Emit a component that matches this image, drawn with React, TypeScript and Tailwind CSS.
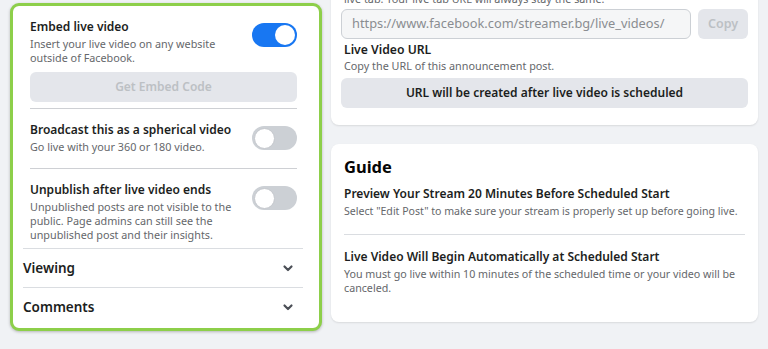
import React from "react";

const font = { fontFamily: '"Noto Sans", "Open Sans", sans-serif' };

function Toggle({ on }: { on: boolean }) {
  return on ? (
    <div className="w-[45px] h-[24px] rounded-full bg-[#1877f2] flex items-center justify-end pr-[2px] shrink-0">
      <div className="w-[20px] h-[20px] rounded-full bg-white" />
    </div>
  ) : (
    <div className="w-[45px] h-[24px] rounded-full bg-[#ccd0d5] flex items-center pl-[2px] shrink-0">
      <div className="w-[21px] h-[21px] rounded-full bg-white border border-[#c4c7cc]" />
    </div>
  );
}

function Chevron() {
  return (
    <svg width="14" height="14" viewBox="0 0 14 14" className="shrink-0">
      <path d="M3.5 5.5 L7 9 L10.5 5.5" fill="none" stroke="#4b4f56" strokeWidth="2.2" strokeLinecap="round" strokeLinejoin="round" />
    </svg>
  );
}

export default function App() {
  return (
    <div style={font} className="w-[768px] h-[349px] bg-[#f0f2f5] overflow-hidden flex items-start">
      {/* Left card */}
      <div className="ml-[10px] mt-[3px] w-[312px] h-[328px] border-[3px] border-[#8dcf4a] rounded-[9px] bg-white shadow-[0_1px_3px_rgba(0,0,0,0.25)] pl-[10px] pr-[16px] flex flex-col">
        <div className="pl-[7px] pr-[6px]">
          {/* Embed */}
          <div className="flex items-start justify-between pt-[13px]">
            <div>
              <div className="text-[12px] leading-[16px] font-semibold text-[#1c1e21]">Embed live video</div>
              <div className="text-[10.8px] leading-[14px] text-[#65676b] mt-[2px] w-[200px]">
                Insert your live video on any website outside of Facebook.
              </div>
            </div>
            <div className="mt-[4px]"><Toggle on /></div>
          </div>
          <div className="mt-[7px] h-[30px] rounded-[6px] bg-[#e4e6eb] flex items-center justify-center text-[12px] font-semibold text-[#bcc0c4]">
            Get Embed Code
          </div>
          <div className="mt-[6px] h-px bg-[#ced0d4]" />
          {/* Spherical */}
          <div className="flex items-start justify-between pt-[13px] h-[59px]">
            <div>
              <div className="text-[12px] leading-[16px] font-semibold text-[#1c1e21]">Broadcast this as a spherical video</div>
              <div className="text-[10.8px] leading-[14px] text-[#65676b] mt-[2px]">Go live with your 360 or 180 video.</div>
            </div>
            <div className="mt-[4px]"><Toggle on={false} /></div>
          </div>
          <div className="h-px bg-[#ced0d4]" />
          {/* Unpublish */}
          <div className="flex items-start justify-between pt-[13px] h-[79px]">
            <div>
              <div className="text-[12px] leading-[16px] font-semibold text-[#1c1e21]">Unpublish after live video ends</div>
              <div className="text-[10.8px] leading-[14px] text-[#65676b] mt-[2px] w-[202px]">
                Unpublished posts are not visible to the public. Page admins can still see the unpublished post and their insights.
              </div>
            </div>
            <div className="mt-[4px]"><Toggle on={false} /></div>
          </div>
        </div>
        <div className="h-px bg-[#dadde1]" />
        <div className="h-[38px] flex items-center justify-between pr-[8px]">
          <span className="text-[13.5px] font-semibold text-[#1c1e21]">Viewing</span>
          <Chevron />
        </div>
        <div className="h-px bg-[#dadde1]" />
        <div className="h-[38px] flex items-center justify-between pr-[8px]">
          <span className="text-[13.5px] font-semibold text-[#1c1e21]">Comments</span>
          <Chevron />
        </div>
      </div>

      {/* Right column */}
      <div className="ml-[9px] w-[427px] flex flex-col">
        <div className="-mt-[8px] bg-white rounded-b-[8px] shadow-[0_1px_2px_rgba(0,0,0,0.1)] px-[10px] pb-[17px]">
          <div className="text-[10.8px] leading-[13px] text-[#65676b] pl-[3px]">live tab. Your live tab URL will always stay the same.</div>
          <div className="mt-[4px] flex gap-[7px]">
            <div className="flex-1 h-[30px] rounded-[6px] border border-[#ccd0d5] bg-[#f5f6f7] flex items-center pl-[10px] text-[12.8px] text-[#8a8d91]">
              https://www.facebook.com/streamer.bg/live_videos/
            </div>
            <div className="w-[50px] h-[30px] rounded-[6px] bg-[#e4e6eb] flex items-center justify-center text-[12.5px] font-semibold text-[#bcc0c4]">
              Copy
            </div>
          </div>
          <div className="pl-[3px] mt-[3px] text-[12.2px] leading-[16px] font-semibold text-[#1c1e21]">Live Video URL</div>
          <div className="pl-[3px] mt-[1px] text-[10.8px] leading-[14px] text-[#65676b]">Copy the URL of this announcement post.</div>
          <div className="mt-[5px] h-[30px] rounded-[6px] bg-[#e4e6eb] flex items-center justify-center text-[12px] font-semibold text-[#1c1e21]">
            URL will be created after live video is scheduled
          </div>
        </div>

        <div className="mt-[19px] h-[178px] bg-white rounded-[8px] shadow-[0_1px_2px_rgba(0,0,0,0.1)] px-[13px] pt-[12px]">
          <div className="text-[16.5px] leading-[22px] font-bold text-[#050505]">Guide</div>
          <div className="mt-[8px] text-[12px] leading-[16px] font-semibold text-[#1c1e21]">Preview Your Stream 20 Minutes Before Scheduled Start</div>
          <div className="mt-[2px] text-[10.6px] leading-[14px] text-[#65676b] whitespace-nowrap">Select "Edit Post" to make sure your stream is properly set up before going live.</div>
          <div className="mt-[16px] h-px bg-[#dadde1]" />
          <div className="mt-[14px] text-[12px] leading-[16px] font-semibold text-[#1c1e21]">Live Video Will Begin Automatically at Scheduled Start</div>
          <div className="mt-[2px] text-[10.7px] leading-[14px] text-[#65676b] w-[401px]">You must go live within 10 minutes of the scheduled time or your video will be canceled.</div>
        </div>
      </div>
    </div>
  );
}
